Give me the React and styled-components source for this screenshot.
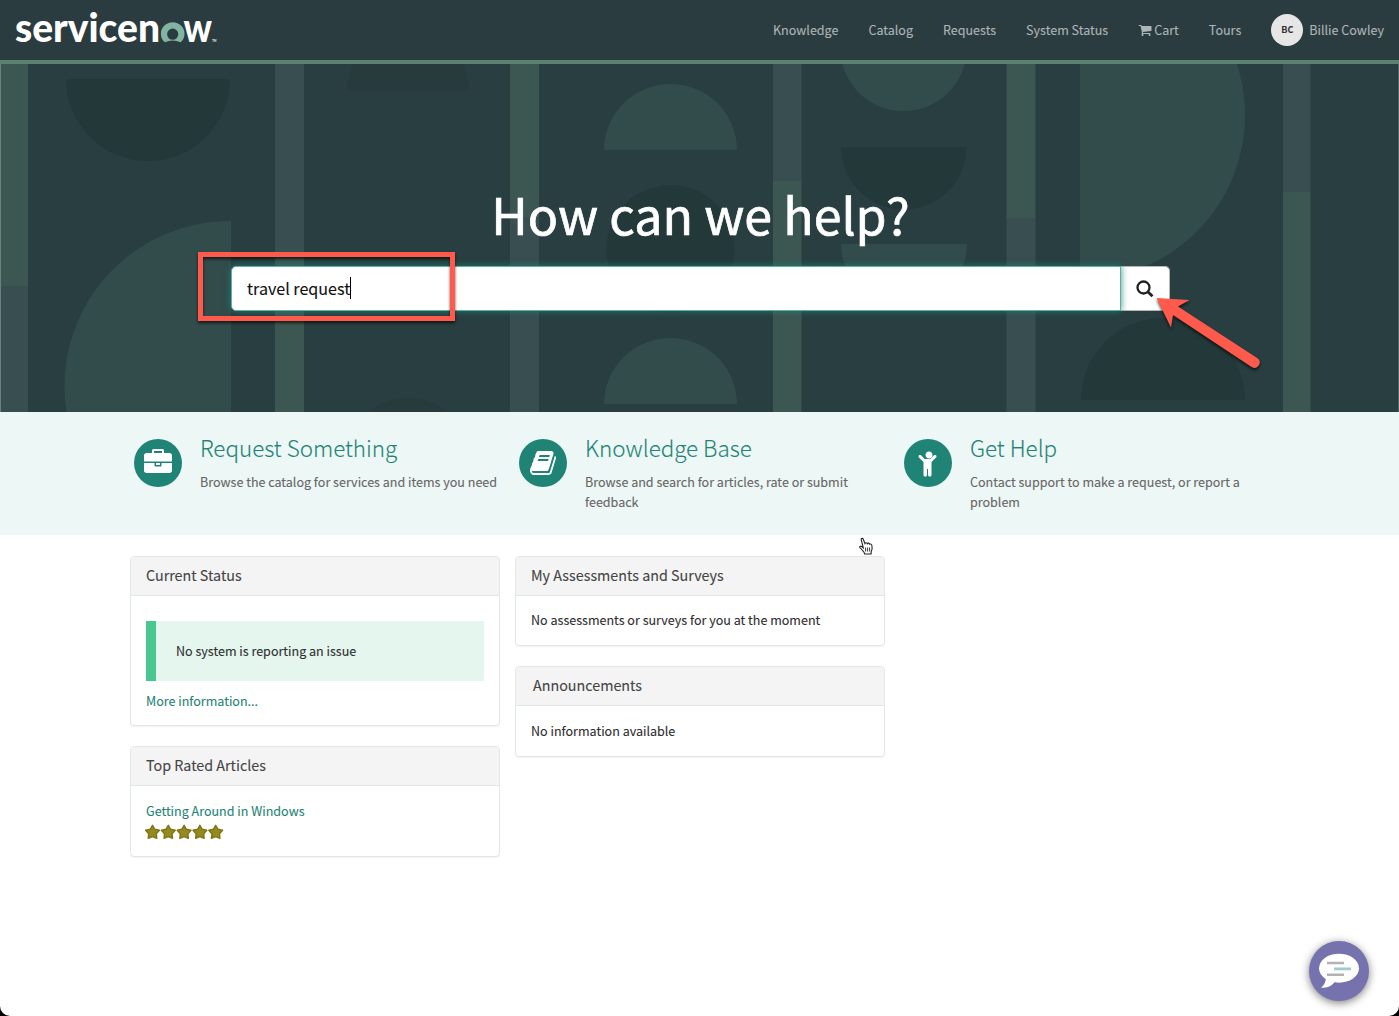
import React from "react";
import styled, { createGlobalStyle } from "styled-components";

const GlobalStyle = createGlobalStyle`
  html, body { margin: 0; padding: 0; background: #000; }
  * { box-sizing: border-box; }
  body {
    font-family: "Noto Sans CJK SC", "Source Sans Pro", sans-serif;
    font-size: 12.54px;
    line-height: 20px;
    color: #2e2e2e;
    -webkit-text-stroke: 0.1px currentColor;
  }
  a { color: inherit; text-decoration: none; }
  h1, h2, h3, p { margin: 0; font-weight: 400; }
  svg { -webkit-text-stroke: 0; }
`;

const Page = styled.div`
  position: relative;
  display: flex;
  flex-direction: column;
  height: 1016px;
  overflow: hidden;
  background: #fff;
  border-radius: 0 0 10px 10px;
`;

const Header = styled.header`
  display: flex;
  align-items: center;
  justify-content: space-between;
  flex: none;
  height: 64px;
  padding: 0 15px;
  background: #2b3c41;
  border-bottom: 4px solid #5c806f;
`;

const Logo = styled.svg`
  display: block;
  width: 202px;
  height: 60px;
`;

const LogoText = styled.text`
  font-family: Lato, sans-serif;
  font-weight: 900;
  font-size: 39.5px;
  fill: #fff;
`;

const TradeMark = styled.text`
  font-family: Lato, sans-serif;
  font-weight: 700;
  font-size: 4px;
  fill: #fff;
`;

const Nav = styled.nav`
  display: flex;
  align-items: center;
  gap: 30px;
  color: #adb5b6;
`;

const NavLink = styled.a`
  display: flex;
  align-items: center;
  gap: ${(p) => p.$gap || 0}px;
  white-space: nowrap;
`;

const Avatar = styled.span`
  display: flex;
  align-items: center;
  justify-content: center;
  width: 32px;
  height: 32px;
  border-radius: 50%;
  background: #e6e6e6;
  color: #333;
  font-size: 9px;
  font-weight: 700;
`;

const Hero = styled.section`
  position: relative;
  display: flex;
  flex-direction: column;
  align-items: center;
  flex: none;
  height: 348px;
  padding: 118px 0 0 2px;
  background: #283e40;
`;

const Pattern = styled.svg`
  position: absolute;
  inset: 0;
  width: 1399px;
  height: 348px;
`;

const HeroTitle = styled.h1`
  position: relative;
  height: 84px;
  line-height: 62px;
  font-size: 50.1px;
  color: #fff;
  white-space: nowrap;
  -webkit-text-stroke: 0.7px #fff;
`;

const SearchBar = styled.form`
  position: relative;
  display: flex;
  width: 939px;
  height: 45px;
`;

const SearchField = styled.div`
  display: flex;
  align-items: center;
  flex: 1;
  z-index: 1;
  padding: 0 0 2px 15px;
  border: 1px solid #5fb0a2;
  border-radius: 5px 0 0 5px;
  background: #fff;
  box-shadow: 0 0 7px rgba(31, 132, 118, 0.9);
  color: #111;
  font-size: 16.1px;
`;

const Caret = styled.span`
  width: 1px;
  height: 22px;
  background: #000;
`;

const SearchButton = styled.button`
  display: flex;
  align-items: center;
  justify-content: center;
  width: 49px;
  padding: 0;
  border: 1px solid #b5b5b5;
  border-left: 0;
  border-radius: 0 5px 5px 0;
  background: #fff;
`;

const Features = styled.section`
  display: grid;
  grid-template-columns: repeat(3, 370px);
  column-gap: 15px;
  flex: none;
  height: 123px;
  padding: 22px 0 0 130px;
  background: #edf7f5;
`;

const Feature = styled.a`
  display: flex;
  gap: 18px;
  padding-left: 4px;
`;

const FeatureIcon = styled.span`
  display: flex;
  align-items: center;
  justify-content: center;
  flex: none;
  width: 48px;
  height: 48px;
  margin-top: 4.5px;
  padding: ${(p) => p.$nudge || "0"};
  border-radius: 50%;
  background: #1f8476;
`;

const FeatureTitle = styled.h2`
  height: 38px;
  line-height: 26px;
  font-size: 22.4px;
  font-weight: 300;
  color: #1f8476;
  white-space: nowrap;
`;

const FeatureText = styled.p`
  width: ${(p) => p.$width || 300}px;
  color: #666;
`;

const Columns = styled.main`
  display: grid;
  grid-template-columns: repeat(2, 370px);
  column-gap: 15px;
  align-items: start;
  padding: 21px 0 0 130px;
`;

const Column = styled.div`
  display: flex;
  flex-direction: column;
  gap: 20px;
`;

const Panel = styled.section`
  height: ${(p) => p.$height}px;
  border: 1px solid #e0e8e8;
  border-radius: 4px;
  background: #fff;
  box-shadow: 0 1px 1px rgba(0, 0, 0, 0.05);
  overflow: hidden;
`;

const PanelTitle = styled.h3`
  height: 39px;
  padding-left: ${(p) => p.$indent || 15}px;
  line-height: ${(p) => p.$line || 36}px;
  border-bottom: 1px solid #e0e8e8;
  background: #f4f4f4;
  font-size: 14.32px;
  color: #444;
`;

const PanelBody = styled.div`
  padding: ${(p) => p.$top || 15}px 15px 0;
`;

const Alert = styled.div`
  height: 60px;
  margin-bottom: 10px;
  padding-left: 20px;
  border-left: 10px solid #49c78f;
  background: #e5f6ee;
  line-height: 60px;
`;

const TextLink = styled.a`
  display: block;
  color: #1f8476;
`;

const Stars = styled.svg`
  display: block;
  width: 80px;
  height: 16px;
  margin: 3px 0 0 -1px;
`;

const Highlight = styled.div`
  position: absolute;
  left: 198px;
  top: 252px;
  width: 257px;
  height: 69px;
  z-index: 2;
  border: 5px solid #ff5a4c;
  filter: drop-shadow(0 2px 1.5px rgba(0, 0, 0, 0.65));
`;

const Arrow = styled.svg`
  position: absolute;
  left: 1150px;
  top: 290px;
  z-index: 2;
  filter: drop-shadow(0 2px 1.5px rgba(0, 0, 0, 0.65));
`;

const Cursor = styled.svg`
  position: absolute;
  left: 858px;
  top: 537px;
`;

const ChatButton = styled.button`
  position: absolute;
  right: 30px;
  bottom: 15px;
  width: 60px;
  height: 60px;
  padding: 0;
  border: 0;
  border-radius: 50%;
  background: #7572ae;
  box-shadow: 0 2px 9px rgba(0, 0, 0, 0.5);
`;

const ICONS = {
  cart: "M704 1536q0 52-38 90t-90 38-90-38-38-90 38-90 90-38 90 38 38 90zm896 0q0 52-38 90t-90 38-90-38-38-90 38-90 90-38 90 38 38 90zm128-1088v512q0 24-16.5 42.500t-40.500 21.500l-1044 122q13 60 13 70 0 16-24 64h920q26 0 45 19t19 45-19 45-45 19h-1024q-26 0-45-19t-19-45q0-11 8-31.500t16-36 21.500-40 15.500-29.500l-177-823h-204q-26 0-45-19t-19-45 19-45 45-19h256q16 0 28.500 6.500t19.500 15.500 13 24.500 8 26 5.500 29.500 4.500 26h1201q26 0 45 19t19 45z",
  briefcase:
    "M640 256h512v-128h-512v128zm1152 640v480q0 66-47 113t-113 47h-1472q-66 0-113-47t-47-113v-480h672v160q0 26 19 45t45 19h320q26 0 45-19t19-45v-160h672zm-768 0v128h-256v-128h256zm768-480v384h-1792v-384q0-66 47-113t113-47h352v-160q0-40 28-68t68-28h576q40 0 68 28t28 68v160h352q66 0 113 47t47 113z",
  book: "M1639 478q40 57 18 129l-275 906q-19 64-76.500 107.500t-122.500 43.500h-923q-77 0-148.500-53.500t-99.500-131.500q-24-67-2-127 0-4 3-27t4-37q1-8-3-21.500t-3-19.500q2-11 8-21t16.500-23.500 16.500-23.500q23-38 45-91.500t30-91.500q3-10 .5-30t-.5-28q3-11 17-28t17-23q21-36 42-92t25-90q1-9-2.500-32t.5-28q4-13 22-30.500t22-22.500q19-26 42.500-84.500t27.500-96.500q1-8-3-25.500t-2-26.500q2-8 9-18t18-23 17-21q8-12 16.500-30.500t15-35 16-36 19.500-32 26.500-23.500 36-11.500 47.500 5.500l-1 3q38-9 51-9h761q74 0 114 56t18 130l-274 906q-36 119-71.500 153.500t-128.500 34.500h-869q-27 0-38 15-11 16-1 43 24 70 144 70h923q29 0 56-15.500t35-41.500l300-987q7-22 5-57 38 15 59 43zm-1064 2q-4 13 2 22.500t20 9.500h608q13 0 25.500-9.500t16.500-22.500l21-64q4-13-2-22.500t-20-9.500h-608q-13 0-25.500 9.500t-16.500 22.500zm-83 256q-4 13 2 22.500t20 9.500h608q13 0 25.500-9.500t16.500-22.500l21-64q4-13-2-22.500t-20-9.500h-608q-13 0-25.500 9.500t-16.500 22.500z",
  child:
    "M1348 540l-292 292v824q0 46-33 79t-79 33-79-33-33-79v-384h-64v384q0 46-33 79t-79 33-79-33-33-79v-824l-292-292q-28-28-28-68t28-68q29-28 68.500-28t67.500 28l228 228h368l228-228q28-28 68-28t68 28q28 29 28 68.500t-28 67.500zm-228-156q0 93-65.500 158.500t-158.500 65.500-158.500-65.500-65.500-158.500 65.500-158.500 158.500-65.500 158.500 65.500 65.500 158.500z",
};

const Icon = ({ name, size, color = "#fff" }) => (
  <svg width={size} height={size} viewBox="0 0 1792 1792" fill={color}>
    <path d={ICONS[name]} />
  </svg>
);

const STRIPES = [
  { x: 0, w: 28, split: 222, greenFirst: true },
  { x: 275, w: 29, split: 195, greenFirst: false },
  { x: 510, w: 29, split: 153, greenFirst: true },
  { x: 773, w: 28.5, split: 117, greenFirst: false },
  { x: 1006.5, w: 29, split: 154, greenFirst: true },
  { x: 1283, w: 27.5, split: 128, greenFirst: false },
];

const GREEN = "#3c5651";
const SLATE = "#384e51";

const HeroPattern = () => (
  <Pattern viewBox="0 0 1399 348">
    {STRIPES.map((s) => (
      <g key={s.x}>
        <rect x={s.x} y="0" width={s.w} height={s.split} fill={s.greenFirst ? GREEN : SLATE} />
        <rect x={s.x} y={s.split} width={s.w} height={348 - s.split} fill={s.greenFirst ? SLATE : GREEN} />
      </g>
    ))}
    <g fill="#233839">
      <path d="M66 15H230A82 82 0 0 1 66 15Z" />
      <circle cx="670.500" cy="185" r="64" />
      <path d="M841 83H966.500A62.750 62.500 0 0 1 841 83Z" />
      <path d="M1081 336A82 82 0 0 1 1245 336Z" />
    </g>
    <g fill="#273b3c">
      <path d="M347 27A61 61 0 0 1 469 27Z" />
      <circle cx="408" cy="395" r="61" />
    </g>
    <g fill="#324b4b">
      <path d="M231 157A166 165 0 0 0 66.500 348H231Z" />
      <path d="M604 86A66.500 66 0 0 1 737 86Z" />
      <path d="M604 340A66.500 66 0 0 1 737 340Z" />
      <circle cx="903.500" cy="-16.500" r="63.500" />
      <path d="M841 180H967A63 62 0 0 1 841 180Z" />
      <path d="M1080 0H1237A165 165 0 0 1 1080 216Z" />
    </g>
    <rect width="1" height="348" fill="#6d8080" />
    <rect x="1398" width="1" height="348" fill="#4f6464" />
  </Pattern>
);

const NAV = ["Knowledge", "Catalog", "Requests", "System Status"];

const FEATURES = [
  { icon: "briefcase", nudge: "1px 0 0 0", title: "Request Something", text: "Browse the catalog for services and items you need" },
  { icon: "book", nudge: "1px 0 0 2px", title: "Knowledge Base", text: "Browse and search for articles, rate or submit feedback", width: 290 },
  { icon: "child", nudge: "1px 0 0 2px", title: "Get Help", text: "Contact support to make a request, or report a problem", width: 290 },
];

const STAR = "M8 1.300L10.300 5.300L14.900 6.300L11.800 9.700L12.200 14.200L8 12.600L3.800 14.200L4.200 9.700L1.100 6.300L5.700 5.300Z";

export default function App() {
  return (
    <>
      <GlobalStyle />
      <Page>
        <Header>
          <Logo viewBox="0 0 202 60">
            <LogoText x="0" y="41.700" textLength="145" lengthAdjust="spacingAndGlyphs">servicen</LogoText>
            <path d="M149.900 42.300A11.800 11.500 0 1 1 165.500 42.300Q157.700 38.500 149.900 42.300ZM157.700 28.600A5.600 5.600 0 1 0 157.700 39.800A5.600 5.600 0 1 0 157.700 28.600Z" fill="#81b5a1" fillRule="evenodd" />
            <LogoText x="168.500" y="41.700" textLength="28.500" lengthAdjust="spacingAndGlyphs">w</LogoText>
            <TradeMark x="197.200" y="41.700" textLength="4.300" lengthAdjust="spacingAndGlyphs">TM</TradeMark>
          </Logo>
          <Nav>
            {NAV.map((n) => (
              <NavLink key={n}>{n}</NavLink>
            ))}
            <NavLink $gap={2}>
              <Icon name="cart" size={14} color="#adb5b6" />
              Cart
            </NavLink>
            <NavLink>Tours</NavLink>
            <NavLink $gap={6}>
              <Avatar>BC</Avatar>
              Billie Cowley
            </NavLink>
          </Nav>
        </Header>

        <Hero>
          <HeroPattern />
          <HeroTitle>How can we help?</HeroTitle>
          <SearchBar>
            <SearchField>
              travel request
              <Caret />
            </SearchField>
            <SearchButton type="button" aria-label="Search">
              <svg width="18" height="18" viewBox="0 0 18 18" fill="none" stroke="#222" strokeWidth="2.300">
                <circle cx="7.500" cy="7.500" r="6" />
                <path d="M11.800 11.800L16.500 16.300" strokeWidth="2.800" />
              </svg>
            </SearchButton>
          </SearchBar>
        </Hero>

        <Features>
          {FEATURES.map((f) => (
            <Feature key={f.title}>
              <FeatureIcon $nudge={f.nudge}>
                <Icon name={f.icon} size={28} />
              </FeatureIcon>
              <div>
                <FeatureTitle>{f.title}</FeatureTitle>
                <FeatureText $width={f.width}>{f.text}</FeatureText>
              </div>
            </Feature>
          ))}
        </Features>

        <Columns>
          <Column>
            <Panel $height={170}>
              <PanelTitle>Current Status</PanelTitle>
              <PanelBody $top={24.5}>
                <Alert>No system is reporting an issue</Alert>
                <TextLink>More information...</TextLink>
              </PanelBody>
            </Panel>
            <Panel $height={111}>
              <PanelTitle>Top Rated Articles</PanelTitle>
              <PanelBody>
                <TextLink>Getting Around in Windows</TextLink>
                <Stars viewBox="0 0 80 16">
                  {[0, 1, 2, 3, 4].map((i) => (
                    <path key={i} d={STAR} transform={`translate(${i * 15.8 - 0.5} 0)`} fill="#968a1c" stroke="#80761a" strokeWidth="1.500" strokeLinejoin="round" />
                  ))}
                </Stars>
              </PanelBody>
            </Panel>
          </Column>
          <Column>
            <Panel $height={90}>
              <PanelTitle>My Assessments and Surveys</PanelTitle>
              <PanelBody $top={14}>No assessments or surveys for you at the moment</PanelBody>
            </Panel>
            <Panel $height={91}>
              <PanelTitle $indent={17}>Announcements</PanelTitle>
              <PanelBody>No information available</PanelBody>
            </Panel>
          </Column>
        </Columns>

        <Highlight />
        <Arrow width="120" height="90" viewBox="1150 290 120 90" fill="#ff5a4c">
          <path d="M1156.500 298L1189.500 300L1178 306.500L1257.500 358.300A5.300 5.300 0 0 1 1252 367.300L1173 315L1171 327.500Z" />
        </Arrow>
        <Cursor width="17" height="19" viewBox="0 0 17 19">
          <path
            d="M3.200 2.600C3 1.200 4.800.9 5.300 2.200L6.900 6.500C7.300 5.400 9 5.500 9.300 6.700C9.900 5.800 11.300 6 11.600 7.200C12.500 6.600 13.700 7.200 13.900 8.400C14.500 11.200 14.200 12.800 13.200 14.600L13.100 17H6.700C6.300 15.300 4.200 12.800 1.900 10.700C1 9.500 2.500 8.700 3.600 9.500L5.300 10.800Z"
            fill="#fff"
            stroke="#222"
            strokeWidth="1.100"
          />
          <path d="M7.600 10.500V14.500M9.600 10.500V14.500M11.600 10.500V14.500" stroke="#222" strokeWidth="0.900" />
        </Cursor>
        <ChatButton type="button" aria-label="Chat">
          <svg width="60" height="60" viewBox="0 0 60 60">
            <ellipse cx="30" cy="27.200" rx="20" ry="14.500" fill="#fff" />
            <path d="M17 36Q17 43 12 46.500Q21 48 26.500 40Z" fill="#fff" />
            <path d="M18 22H35M18 33.700H35" stroke="#b3b3b3" strokeWidth="2.600" />
            <path d="M25 27.800H42" stroke="#9ccbd1" strokeWidth="2.800" />
          </svg>
        </ChatButton>
      </Page>
    </>
  );
}
